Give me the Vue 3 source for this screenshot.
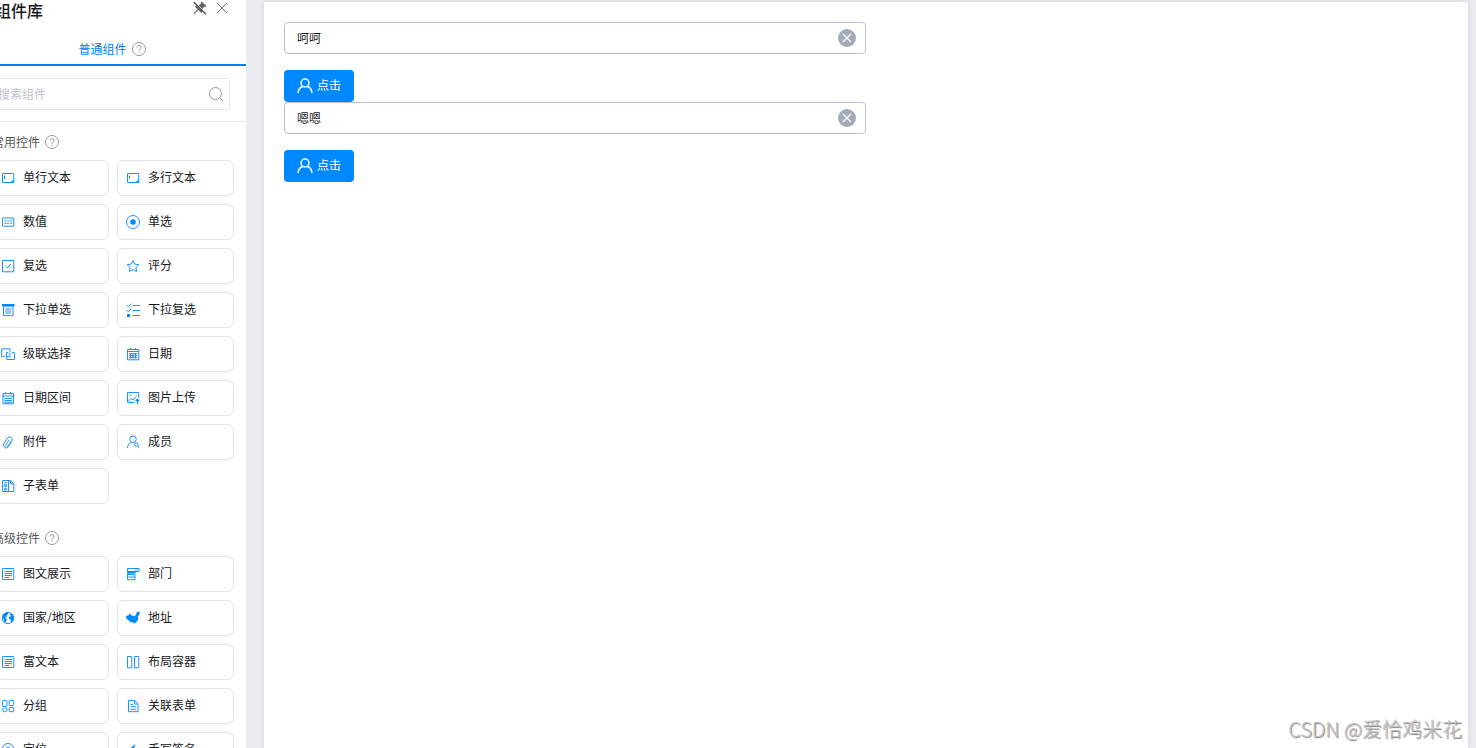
<script setup>
import { ref } from 'vue'

const keyword = ref('')

const groups = [
  {
    title: '常用控件',
    items: [
      { name: '单行文本', icon: 'text' },
      { name: '多行文本', icon: 'text' },
      { name: '数值', icon: 'number' },
      { name: '单选', icon: 'radio' },
      { name: '复选', icon: 'checkbox' },
      { name: '评分', icon: 'star' },
      { name: '下拉单选', icon: 'select' },
      { name: '下拉复选', icon: 'multi' },
      { name: '级联选择', icon: 'cascade' },
      { name: '日期', icon: 'date' },
      { name: '日期区间', icon: 'range' },
      { name: '图片上传', icon: 'image' },
      { name: '附件', icon: 'clip' },
      { name: '成员', icon: 'member' },
      { name: '子表单', icon: 'subform' }
    ]
  },
  {
    title: '高级控件',
    items: [
      { name: '图文展示', icon: 'rich' },
      { name: '部门', icon: 'dept' },
      { name: '国家/地区', icon: 'globe' },
      { name: '地址', icon: 'map' },
      { name: '富文本', icon: 'rich' },
      { name: '布局容器', icon: 'layout' },
      { name: '分组', icon: 'group' },
      { name: '关联表单', icon: 'doc' },
      { name: '定位', icon: 'locate' },
      { name: '手写签名', icon: 'sign' }
    ]
  }
]

// 14x14 icons, s = stroked path, f = filled path, t = label inside the icon
const icons = {
  text: { s: 'M1.500 2.500h11.300v9h-11.300zM3.500 4.500v3.500', f: 'M12.500 8.500v3h-3z' },
  number: { s: 'M1.500 3h11.300v8.200h-11.300z', t: '123' },
  radio: { s: 'M7 .5a6.500 6.500 0 1 1 0 13a6.500 6.500 0 1 1 0-13z', f: 'M7 4.200a2.800 2.800 0 1 1 0 5.600a2.800 2.800 0 1 1 0-5.600z' },
  checkbox: { s: 'M1.500 1.500h11.300v11.300h-11.300zM4.200 6.800l2 2l3.800-3.800' },
  star: { s: 'M7 1.500l1.800 3.600l4 .6l-2.900 2.800l.7 4l-3.600-1.900l-3.600 1.900l.7-4l-2.900-2.800l4-.6z' },
  select: { s: 'M1.500 1.500h11.500v1.700h-11.500zM2.500 3.500v9.200h9.500v-9.200M4.300 6h5.900M4.300 8h5.900M4.300 10h5.900', f: 'M1 1h12.500v2h-12.500z' },
  multi: { s: 'M.3 1.800l2 2l3-3.200M.3 6.800l2 2l3-3.200M6.500 2.500h7.500M6.500 7.500h7.500M6.500 12.500h7.500', f: 'M1 11h3v3h-3z' },
  cascade: { s: 'M4 9.300h-3.300v-7.500h8.300v3.500M9 6v3.700h-3.500v-4.200h2M5.700 9.500v3h7.800v-6.800h-2.800' },
  date: { s: 'M1.500 2.500h11.300v10.300h-11.300zM1.500 4.500h11.300M4.500 1v2M9.500 1v2M3 6.700h8.500M3 8.700h8.500M3 10.700h8.500M4.500 6v5.500M7 6v5.500M9.500 6v5.500' },
  range: { s: 'M2 2.500h10.500v10.300h-10.500zM1 5h12.500M4.500 1v2.500M9.500 1v2.500M3.500 7.500h7.500M3.500 9.500h7.500M3 11.300h8.500' },
  image: { s: 'M8.500 11.500h-7v-10h11.300v5.500M2 10.500l3-3l2 1.500l4-4.500M3.500 4.300h1.700M11.500 13.500v-4.500', f: 'M8.800 10.200l2.700-3l2.500 3z' },
  clip: { s: 'M10.700 6.500l-3.400 5.200a2.700 2.700 0 0 1-4.500-3l3.800-5.700a2.400 2.400 0 0 1 4.200 2.600l-3.500 5.200a1.200 1.200 0 0 1-2.200-1.300l3-4.500' },
  member: { s: 'M7 1a3.300 3.300 0 1 1 0 6.600a3.300 3.300 0 1 1 0-6.600zM1.300 13q.4-4.500 4-5.500M10.500 7.800a1.800 1.800 0 1 1 0 3.600a1.800 1.800 0 1 1 0-3.600zM11.500 11l1.500 2' },
  subform: { s: 'M1.500 1.500h8l3.300 3.300v7.700h-11.300zM7.500 2v10.500M3 3.700h3M3.500 5.700h2v2h-2zM3.500 9.700h2v1.300h-2zM9.500 1.500v3.300h3.300' },
  rich: { s: 'M1.500 1.500h11.300v11h-11.300zM3.500 4.500h7.500M3.500 6.500h7.500M3.500 8.500h7.500M3.500 10.500h4.500' },
  dept: { s: 'M1.500 1.500h11.500v3h-11.500zM10 1.500v3M1.500 7.500h7.500v5.200h-7.500zM1.500 10h7.500M2 4.500v3', f: 'M1 4.500h8.500v2h-8.500z' },
  globe: { s: 'M7 1.300a5.700 5.700 0 1 1 0 11.400a5.700 5.700 0 1 1 0-11.400z', f: 'M1.500 4l3.500-2.500l2.500.5l-.5 1.500l-1.500.5l.5 1.500l-2 1l1.700 1.500l-.7 3.500l-1.700-.8l-.5-2.700l-1.500-1.500zM8.500 3.500l2-1.200l2 2.700l.3 3l-1.300 2.500l-1.500.5l-.5-2.500l-1.700-.8l.2-1.700l2-.7l-.5-1z' },
  map: { f: 'M0 5l2.500-.7l1.500-1.800l1.500 2l2.500.8l2-1.300l.5-2.500l2.500-1l1 1l-1 2.500l-1.200 1.500l.5 3l-1.800 2.500l-2.500 1.500l-1.500-1.500l-2 .5l-2-2.500l-2-1z' },
  layout: { s: 'M1.500 1.500h4.300v11.300h-4.300zM8.500 1.500h4.300v11.300h-4.300z' },
  group: { s: 'M2.300 1.500h2.900q.8 0 .8.800v4.400q0 .8-.8.800h-2.900q-.8 0-.8-.8v-4.400q0-.8.8-.8zM9 1.500h3q.8 0 .8.800v3.400q0 .8-.8.800h-3q-.8 0-.8-.8v-3.400q0-.8.8-.8zM3.700 9h.6a1.800 1.800 0 1 1 0 3.700h-.8a1.800 1.800 0 1 1 .2-3.700zM9 8.500h3q.8 0 .8.800v2.600q0 .8-.8.800h-3q-.8 0-.8-.8v-2.600q0-.8.8-.8z' },
  doc: { s: 'M2.500 1.500h6.200l3.300 3.300v7.900h-9.500zM8.500 1.500v3.500h3.500M4.500 5.500h2.500M4.500 7.700h5.500M4.500 10.300h5.500' },
  locate: { s: 'M7 13.500q-5.500-5-5.500-8a5.500 5 0 0 1 11 0q0 3-5.500 8zM7 4a2 2 0 1 1 0 4a2 2 0 1 1 0-4z' },
  sign: { s: 'M2 12.500h9', f: 'M9.500 1l-5.500 4.500l-1 5l4-2z' }
}

const fields = ref([
  { id: 'field-1', value: '呵呵' },
  { id: 'field-2', value: '嗯嗯' }
])
</script>

<template>
  <div class="designer">
    <aside class="library">
      <header class="library__header">
        <h1>组件库</h1>
        <button type="button" class="icon-btn" aria-label="取消固定">
          <svg width="14" height="14" viewBox="0 0 14 14">
            <path d="M8.500.5l5 4.500l-1 1l-1.200-.2l-2 2.400l.2 2.300l-1 1.500l-3.200-3l-4 4l-.8-.8l4-4l-2.700-2.700l1-1h2.700l2.700-2.200l-.5-1z" fill="#666" />
            <path d="M1.500.5l12 12" stroke="#fff" />
            <path d="M.7 1l12.300 12.300" stroke="#555" stroke-width="1.300" />
          </svg>
        </button>
        <button type="button" class="icon-btn" aria-label="关闭">
          <svg width="14" height="14" viewBox="0 0 14 14">
            <path d="M2 2l10 10M12 2l-10 10" stroke="#777" fill="none" />
          </svg>
        </button>
      </header>

      <nav class="tabs">
        <a href="#">普通组件</a>
        <svg class="help" width="14" height="14" viewBox="0 0 14 14">
          <circle cx="7" cy="7" r="6.500" />
          <path d="M5 5.500a2 1.900 0 1 1 2.700 1.800q-.7.400-.7 1.300M7 9.800v1.100" />
        </svg>
      </nav>

      <div class="search">
        <div class="search__box">
          <input v-model="keyword" type="text" placeholder="搜索组件" aria-label="搜索组件">
          <svg width="16" height="16" viewBox="0 0 16 16">
            <path d="M7.500 1.500a6 6 0 1 1 0 12a6 6 0 1 1 0-12zM12 12l3 3" fill="none" stroke="#8e9aab" />
          </svg>
        </div>
      </div>

      <section v-for="group in groups" :key="group.title" class="group">
        <h2>
          {{ group.title }}
          <svg class="help" width="14" height="14" viewBox="0 0 14 14">
            <circle cx="7" cy="7" r="6.500" />
            <path d="M5 5.500a2 1.900 0 1 1 2.700 1.800q-.7.400-.7 1.300M7 9.800v1.100" />
          </svg>
        </h2>
        <div class="group__list">
          <button v-for="item in group.items" :key="item.name" type="button" class="widget">
            <svg width="14" height="14" viewBox="0 0 14 14">
              <path v-if="icons[item.icon].s" :d="icons[item.icon].s" class="stroke" />
              <path v-if="icons[item.icon].f" :d="icons[item.icon].f" class="fill" />
              <text v-if="icons[item.icon].t" x="7" y="9" class="label">{{ icons[item.icon].t }}</text>
            </svg>
            <span>{{ item.name }}</span>
          </button>
        </div>
      </section>
    </aside>

    <main class="canvas">
      <div v-for="field in fields" :key="field.id" class="field">
        <div class="field__box">
          <input :id="field.id" v-model="field.value" type="text" aria-label="输入框">
          <button type="button" class="icon-btn" aria-label="清空" @click="field.value = ''">
            <svg width="18" height="18" viewBox="0 0 18 18">
              <circle cx="9" cy="9" r="9" fill="#a2adb9" />
              <path d="M5 5l8 8M13 5l-8 8" stroke="#fff" stroke-width="1.200" />
            </svg>
          </button>
        </div>
        <button type="button" class="primary">
          <svg width="16" height="16" viewBox="0 0 16 16">
            <path d="M8 1a4 4 0 1 1 0 8a4 4 0 1 1 0-8zM1 15q.5-5.500 5-6.500M10 8.500q4.500 1 5 6.500" fill="none" stroke="#fff" stroke-width="1.400" />
          </svg>
          <span>点击</span>
        </button>
      </div>
    </main>

    <div class="watermark">CSDN @爱恰鸡米花</div>
  </div>
</template>

<style>
body {
  margin: 0;
  overflow: hidden;
  background: #ebecf1;
}
</style>

<style scoped>
* {
  box-sizing: border-box;
}
.designer {
  display: flex;
  height: 100vh;
  margin-left: -24px;
  overflow: hidden;
  color: #171a1d;
  font-family: "Noto Sans CJK SC", sans-serif;
  font-size: 12px;
  line-height: 18px;
}
button,
input {
  padding: 0;
  border: 0;
  background: none;
  color: inherit;
  font: inherit;
  outline: none;
}
button {
  cursor: pointer;
}
svg {
  display: block;
  flex: none;
}
.icon-btn {
  display: flex;
}

.library {
  flex: none;
  width: 270px;
  overflow: hidden;
  background: #fff;
}
.library__header {
  display: flex;
  align-items: flex-start;
  gap: 8px;
  height: 34px;
  padding: 1px 17px 0 19px;
}
.library__header h1 {
  flex: 1;
  margin: 0;
  font-size: 16px;
  font-weight: 500;
  line-height: 18px;
}
.tabs {
  display: flex;
  align-items: center;
  justify-content: center;
  gap: 5px;
  height: 32px;
  padding-left: 2px;
  border-bottom: 2px solid #0080f6;
}
.tabs a {
  color: #0080f6;
  text-decoration: none;
}
.help {
  fill: none;
  stroke: #999;
}
.search {
  padding: 12px 16px 11px;
  border-bottom: 1px solid #e8e9eb;
}
.search__box {
  display: flex;
  align-items: center;
  height: 32px;
  padding: 0 5px;
  border: 1px solid #e6e8eb;
  border-radius: 2px;
}
.search__box input {
  flex: 1;
  min-width: 0;
}
.search__box input::placeholder {
  color: #bcc3cc;
}

.group {
  padding: 2px 12px 14px 16px;
}
.group h2 {
  display: flex;
  align-items: center;
  gap: 5px;
  height: 36px;
  margin: 0;
  color: #555;
  font-size: 12px;
  font-weight: 400;
}
.group__list {
  display: grid;
  grid-template-columns: 1fr 1fr;
  gap: 8px;
}
.widget {
  display: flex;
  align-items: center;
  gap: 8px;
  height: 36px;
  padding: 0 8px;
  border: 1px solid #e3e4e6;
  border-radius: 6px;
}
.widget span,
.primary span {
  padding-bottom: 2px;
}
.stroke {
  fill: none;
  stroke: #1c92ff;
}
.fill {
  fill: #0089ff;
}
.label {
  fill: #0089ff;
  font-family: "Liberation Sans", sans-serif;
  font-size: 5px;
  text-anchor: middle;
}

.canvas {
  flex: 1;
  min-width: 0;
  margin: 2px 8px 0 18px;
  padding: 20px;
  background: #fff;
  box-shadow: 0 0 6px rgba(30, 50, 90, .12);
}
.field__box {
  display: flex;
  align-items: center;
  width: 50%;
  height: 32px;
  margin-bottom: 16px;
  padding: 0 9px 0 12px;
  border: 1px solid #b9c2cc;
  border-radius: 4px;
}
.field__box input {
  flex: 1;
  min-width: 0;
}
.primary {
  display: flex;
  align-items: center;
  gap: 4px;
  height: 32px;
  padding: 0 13px;
  border-radius: 4px;
  background: #0089ff;
  color: #fff;
}

/* lies over the canvas corner */
.watermark {
  position: absolute;
  right: 14px;
  bottom: 5px;
  color: #c4c4c4;
  font-size: 20px;
  font-weight: 300;
  line-height: 28px;
  text-shadow: 1px 1px 1px #777;
}
</style>
